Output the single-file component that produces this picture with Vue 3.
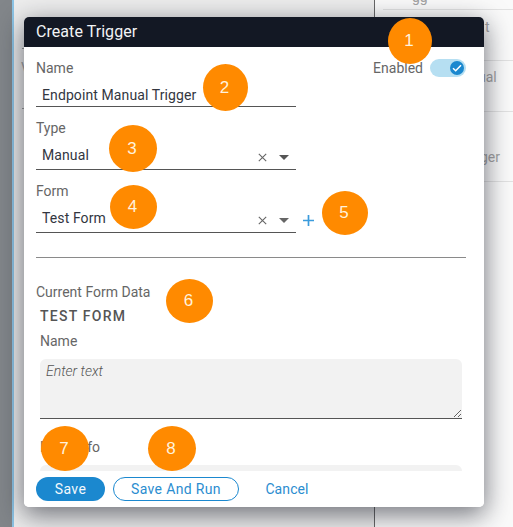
<script setup>
const badges = [
  { n: 1, x: 388, y: 18, w: 44, h: 46 },
  { n: 2, x: 203, y: 64, w: 45, h: 47 },
  { n: 3, x: 109, y: 125, w: 48, h: 47 },
  { n: 4, x: 110, y: 185, w: 47, h: 44 },
  { n: 5, x: 322, y: 191, w: 46, h: 44 },
  { n: 6, x: 166, y: 279, w: 47, h: 44 },
  { n: 7, x: 41, y: 426, w: 48, h: 45 },
  { n: 8, x: 148, y: 426, w: 48, h: 45 }
]
</script>

<template>
  <div class="page">
    <div class="backdrop">
      <div class="rail"></div>
      <div class="side">
        <div class="bgline b1"></div>
        <div class="bgline b2"></div>
        <div class="bgline b3"></div>
        <div class="bgline b4"></div>
        <span class="bgtext t1">gg</span>
        <span class="bgtext t2">t</span>
        <span class="bgtext t3">ual</span>
        <span class="bgtext t4">ger</span>
      </div>
      <span class="bgtext t5">V</span>
      <div class="tick k1"></div>
      <div class="tick k2"></div>
    </div>

    <section class="modal">
      <header class="head">Create Trigger</header>
      <div class="body">
        <div class="label-row">
          <span class="label">Name</span>
          <div class="enabled">
            <span class="label">Enabled</span>
            <span class="toggle">
              <span class="knob">
                <svg width="10" height="8" viewBox="0 0 10 8"><path d="M1 4.2 3.7 6.8 9 1.2" fill="none" stroke="#fff" stroke-width="1.5"/></svg>
              </span>
            </span>
          </div>
        </div>
        <div class="control text-control">Endpoint Manual Trigger</div>

        <div class="label top">Type</div>
        <div class="control select-control">
          <span>Manual</span>
          <span class="icons">
            <svg width="9" height="9" viewBox="0 0 9 9"><path d="M.8.8l7.4 7.4M8.2.8.8 8.2" stroke="#666" stroke-width="1.1" fill="none"/></svg>
            <svg width="10" height="5" viewBox="0 0 10 5"><path d="M0 0h10L5 5z" fill="#555"/></svg>
          </span>
        </div>

        <div class="label top">Form</div>
        <div class="form-row">
          <div class="control select-control">
            <span>Test Form</span>
            <span class="icons">
              <svg width="9" height="9" viewBox="0 0 9 9"><path d="M.8.8l7.4 7.4M8.2.8.8 8.2" stroke="#666" stroke-width="1.1" fill="none"/></svg>
              <svg width="10" height="5" viewBox="0 0 10 5"><path d="M0 0h10L5 5z" fill="#666"/></svg>
            </span>
          </div>
          <svg class="plus" width="11" height="11" viewBox="0 0 11 11"><path d="M5.5 0v11M0 5.5h11" stroke="#3b9bdc" stroke-width="1.7" fill="none"/></svg>
        </div>

        <hr class="divider" />

        <div class="label">Current Form Data</div>
        <div class="inner">
          <div class="form-title">TEST FORM</div>
          <div class="label inner-label">Name</div>
          <textarea class="area" placeholder="Enter text"></textarea>
          <div class="label info-label">More Info</div>
          <div class="area-next"></div>
        </div>
      </div>
      <footer class="foot">
        <button class="btn primary">Save</button>
        <button class="btn outline">Save And Run</button>
        <button class="btn link">Cancel</button>
      </footer>
    </section>

    <div
      v-for="b in badges"
      :key="b.n"
      class="badge"
      :style="{ left: b.x + 'px', top: b.y + 'px', width: b.w + 'px', height: b.h + 'px' }"
    >{{ b.n }}</div>
  </div>
</template>

<style>
html, body { margin: 0; padding: 0; }
</style>

<style scoped>
.page {
  position: relative;
  width: 513px;
  height: 527px;
  overflow: hidden;
  box-sizing: border-box;
  padding: 17px 29px 20px 24px;
  font-family: Roboto, "Liberation Sans", sans-serif;
  background: #ededed;
}
.backdrop { position: absolute; inset: 0; }
.rail {
  position: absolute;
  left: 0; top: 0; bottom: 0;
  width: 12px;
  background: #82868a;
  border-right: 2px solid #8cc4e6;
}
.side {
  position: absolute;
  left: 374px; top: 0; bottom: 0; right: 0;
  border-left: 1px solid #666;
  background: #fafafa;
}
.bgline { position: absolute; left: 8px; right: 0; height: 1px; background: #e2e2e2; }
.b1 { top: 9px; }
.b2 { top: 60px; }
.b3 { top: 111px; }
.b4 { top: 181px; }
.bgtext { position: absolute; font-size: 14px; line-height: 16px; color: #a3a3a3; }
.t1 { left: 37px; top: -11px; }
.t2 { left: 110px; top: 19px; }
.t3 { left: 103px; top: 69px; }
.t4 { left: 105px; top: 149px; }
.t5 { left: 21px; top: 60px; }
.tick { position: absolute; left: 22px; width: 2px; height: 1px; background: #999; }
.k1 { top: 48px; }
.k2 { top: 108px; }

.modal {
  position: relative;
  height: 490px;
  display: flex;
  flex-direction: column;
  overflow: hidden;
  background: #fff;
  border-radius: 5px;
  box-shadow: 0 7px 26px 1px rgba(20, 24, 36, .58);
}
.head {
  flex: none;
  height: 30px;
  line-height: 30px;
  padding-left: 12px;
  font-size: 16px;
  letter-spacing: .06px;
  color: #f2f3f5;
  background: #131824;
}
.body {
  flex: 1;
  min-height: 0;
  overflow: hidden;
  padding: 11px 18px 0 12px;
}
.label { font-size: 14px; line-height: 20px; color: #666; }
.label.top { margin-top: 11px; }
.label-row { display: flex; justify-content: space-between; }
.enabled { display: flex; align-items: center; gap: 7px; }
.toggle {
  position: relative;
  display: block;
  width: 36px;
  height: 18px;
  border-radius: 9px;
  background: #b6dff2;
}
.knob {
  position: absolute;
  right: 2px;
  top: 2px;
  width: 14px;
  height: 14px;
  border-radius: 50%;
  background: #1b88cf;
  display: flex;
  align-items: center;
  justify-content: center;
}
.control {
  box-sizing: border-box;
  width: 260px;
  border-bottom: 1px solid #555;
  padding-left: 6px;
  font-size: 14px;
  letter-spacing: .1px;
  color: #33363f;
  display: flex;
  align-items: center;
}
.text-control { height: 29px; padding-top: 6px; }
.select-control { height: 32px; padding-top: 2px; justify-content: space-between; }
.icons { display: flex; align-items: center; gap: 12px; padding-right: 7px; padding-top: 5px; }
.form-row { display: flex; align-items: center; gap: 7px; }
.plus { margin-top: 7px; }
.divider { border: 0; height: 1px; background: #8a8a8a; margin: 24px 0; }
.inner { padding-left: 4px; padding-right: 4px; margin-top: 4px; }
.form-title { font-size: 14px; line-height: 20px; font-weight: 500; letter-spacing: 1.25px; color: #555; }
.inner-label { margin-top: 5px; }
.area {
  display: block;
  box-sizing: border-box;
  width: 100%;
  height: 60px;
  margin-top: 8px;
  padding: 4px 6px;
  border: 0;
  border-bottom: 1px solid #555;
  border-radius: 6px 6px 0 0;
  outline: none;
  background: #f2f2f2;
  font-family: Roboto, "Liberation Sans", sans-serif;
  font-size: 14px;
  line-height: 16px;
  font-style: italic;
  font-weight: 300;
}
.area::placeholder { color: #555; opacity: 1; }
.info-label { margin-top: 18px; }
.area-next { height: 40px; margin-top: 8px; background: #f2f2f2; border-radius: 6px 6px 0 0; }
.foot {
  position: relative;
  flex: none;
  height: 36px;
  box-sizing: border-box;
  padding: 6px 12px 0;
  display: flex;
  align-items: flex-start;
  gap: 8px;
  background: #fff;
}
.btn {
  box-sizing: border-box;
  height: 24px;
  border-radius: 12px;
  font-family: inherit;
  font-size: 14px;
  letter-spacing: .35px;
  padding: 0;
  cursor: pointer;
}
.primary { width: 69px; background: #1b88cf; border: 0; color: #f2f8fc; }
.outline { width: 126px; background: #fff; border: 1px solid #1b88cf; color: #2b8dd0; }
.link { margin-left: 18px; width: 44px; background: none; border: 0; color: #2b8dd0; letter-spacing: .1px; }
.badge {
  position: absolute;
  box-sizing: border-box;
  padding-right: 2px;
  display: flex;
  align-items: center;
  justify-content: center;
  border-radius: 50%;
  background: #ff8a00;
  color: #fff2dd;
  font-family: "Liberation Sans", Arial, sans-serif;
  font-size: 17px;
}
</style>
